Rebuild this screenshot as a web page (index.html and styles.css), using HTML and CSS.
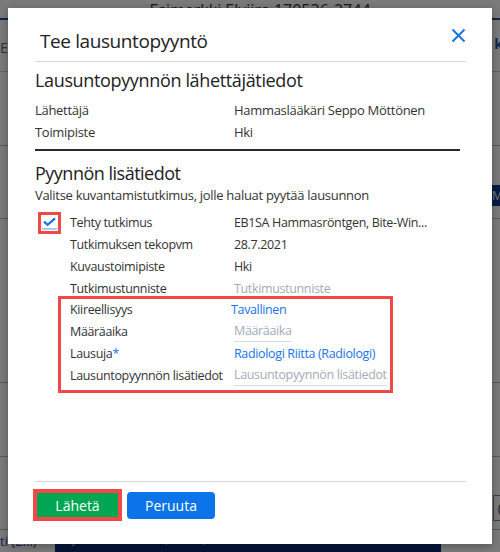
FILE: index.html
```html
<!DOCTYPE html>
<html lang="fi">
<head>
  <meta charset="UTF-8">
  <meta name="viewport" content="width=device-width, initial-scale=1">
  <title>Tee lausuntopyyntö</title>
  <link rel="stylesheet" href="styles.css">
</head>
<body>
  <div class="page">
    <div class="page-header">Esimerkki Elviira 170536-2744</div>
    <div class="page-tabs"><span>EL</span><span class="tab-right">k</span></div>
    <div class="page-row"></div>
    <div class="page-row"><span class="tag-right">Mö</span></div>
    <div class="page-row tall"></div>
    <div class="page-row"></div>
    <div class="page-row"><span class="count-right">(1</span></div>
    <div class="page-bottom">
      <span class="page-link">ti (2...)</span>
      <div class="command-bar">Syötä tähän koodi, fraasi, lomakkeen nimi tai vastaanotto</div>
    </div>
  </div>
  <div class="backdrop"></div>

  <div class="modal">
    <div class="modal-header">
      <h2 class="modal-title">Tee lausuntopyyntö</h2>
      <button class="close-btn" aria-label="Sulje">
        <svg width="15" height="15" viewBox="0 0 15 15"><path d="M1.5 1.5 L13.5 13.5 M13.5 1.5 L1.5 13.5" stroke="#1a73e8" stroke-width="2" fill="none"/></svg>
      </button>
    </div>

    <div class="modal-body">
      <h3 class="section-title">Lausuntopyynnön lähettäjätiedot</h3>
      <div class="info-row"><span class="label">Lähettäjä</span><span class="value">Hammaslääkäri Seppo Möttönen</span></div>
      <div class="info-row"><span class="label">Toimipiste</span><span class="value">Hki</span></div>
      <hr class="dark-line">

      <h3 class="section-title big">Pyynnön lisätiedot</h3>
      <p class="hint">Valitse kuvantamistutkimus, jolle haluat pyytää lausunnon</p>

      <div class="study">
        <div class="check-cell">
          <span class="checkbox">
            <span class="check-inner">
              <svg width="13" height="10" viewBox="0 0 13 10"><path d="M1 4.6 L4.6 7.8 L12 1.4" stroke="#1a73e8" stroke-width="2.3" fill="none"/></svg>
            </span>
          </span>
        </div>
        <div class="study-rows">
          <div class="row"><span class="label">Tehty tutkimus</span><span class="value">EB1SA Hammasröntgen, Bite-Win...</span></div>
          <div class="row"><span class="label">Tutkimuksen tekopvm</span><span class="value">28.7.2021</span></div>
          <div class="row"><span class="label">Kuvaustoimipiste</span><span class="value">Hki</span></div>
          <div class="row"><span class="label">Tutkimustunniste</span><span class="value placeholder">Tutkimustunniste</span></div>
          <div class="highlight">
            <div class="row"><span class="label">Kiireellisyys</span><span class="value link shift">Tavallinen</span></div>
            <div class="row"><span class="label">Määräaika</span><span class="value placeholder field">Määräaika</span></div>
            <div class="row"><span class="label">Lausuja<span class="req">*</span></span><span class="value link">Radiologi Riitta (Radiologi)</span></div>
            <div class="row"><span class="label">Lausuntopyynnön lisätiedot</span><span class="value placeholder field">Lausuntopyynnön lisätiedot</span></div>
          </div>
        </div>
      </div>
    </div>

    <div class="modal-footer">
      <span class="send-outline"><button class="btn btn-send">Lähetä</button></span>
      <button class="btn btn-cancel">Peruuta</button>
    </div>
  </div>
</body>
</html>
```

FILE: styles.css
```css
html, body {
  margin: 0;
  padding: 0;
  height: 100%;
  overflow: hidden;
}
body {
  font-family: 'Open Sans', 'Noto Sans', sans-serif;
  color: #333;
  background: #fff;
  position: relative;
}

/* page behind the dialog */
.page {
  height: 100%;
  display: flex;
  flex-direction: column;
}
.page-header {
  height: 20px;
  border-bottom: 2px solid #2a4f9e;
  text-align: center;
  font-size: 16px;
  line-height: 16px;
  color: #333;
  padding-left: 20px;
  box-sizing: border-box;
  padding-top: 2px;
}
.page-tabs {
  height: 52px;
  border-bottom: 1px solid #ccc;
  display: flex;
  justify-content: space-between;
  align-items: center;
  font-size: 14px;
  color: #666;
  padding-top: 4px;
}
.tab-right { color: #1c4fa8; font-weight: 700; margin-right: -3px; align-self: flex-start; margin-top: 10px; }
.page-row {
  height: 80px;
  border-bottom: 1px solid #bbb;
  display: flex;
  justify-content: flex-end;
  align-items: flex-end;
}
.page-row.tall { height: 180px; }
.tag-right {
  background: #0d3b8a;
  color: #fff;
  font-size: 12px;
  padding: 2px 0 2px 6px;
  margin-bottom: 12px;
  margin-right: -10px;
}
.count-right {
  font-size: 13px;
  color: #444;
  border: 1px solid #888;
  padding: 3px 4px;
  margin-right: -14px;
  margin-bottom: 8px;
}
.page-bottom {
  margin-top: auto;
  display: flex;
  align-items: flex-end;
  height: 24px;
}
.page-link {
  font-size: 13px;
  color: #2a4f9e;
  width: 55px;
  padding-bottom: 2px;
}
.command-bar {
  width: 386px;
  height: 22px;
  background: #0c2a73;
  color: #c9d2e6;
  font-size: 12px;
  padding-left: 10px;
  box-sizing: border-box;
  line-height: 18px;
}
.backdrop {
  position: absolute;
  inset: 0;
  background: rgba(0, 0, 0, 0.52);
}

/* dialog */
.modal {
  position: absolute;
  left: 8px;
  top: 8px;
  width: 484px;
  height: 536px;
  background: #fff;
  box-sizing: border-box;
  padding: 20px 26px 23px 27px;
  display: flex;
  flex-direction: column;
  box-shadow: 0 2px 8px rgba(0,0,0,0.3);
}
.modal-header {
  display: flex;
  justify-content: space-between;
  align-items: flex-start;
  border-bottom: 1px solid #d3dae4;
  padding-bottom: 7px;
}
.modal-title {
  margin: 0 0 0 5px;
  font-size: 19px;
  letter-spacing: -0.4px;
  line-height: 26px;
  font-weight: 400;
  color: #222;
}
.close-btn {
  border: none;
  background: none;
  padding: 0;
  margin: 0;
  width: 15px;
  height: 15px;
}
.close-btn svg { display: block; }

.modal-body { padding-top: 6px; }
.section-title {
  margin: 0 0 7px;
  font-size: 18px;
  letter-spacing: -0.35px;
  line-height: 24px;
  font-weight: 400;
  color: #222;
}
.section-title.big { letter-spacing: -0.5px; margin-bottom: 0; }
.info-row, .hint {
  font-size: 13px;
  letter-spacing: -0.3px;
}
.row {
  font-size: 12.5px;
  letter-spacing: -0.35px;
}
.info-row, .row {
  display: flex;
  line-height: 22px;
}
.info-row .label { width: 199px; }
.label { color: #333; white-space: nowrap; }
.value { color: #333; white-space: nowrap; }
.dark-line {
  border: none;
  border-top: 2px solid #2a2a2a;
  margin: 6px 6px 10px 0;
}
.hint {
  margin: 0 0 7px;
  line-height: 20px;
}
.study {
  display: grid;
  grid-template-columns: 35px 1fr;
}
.check-cell { padding-left: 3px; }
.checkbox {
  display: flex;
  width: 23px;
  height: 22px;
  box-sizing: border-box;
  border: 3px solid #f24848;
  background: #fff;
  align-items: center;
  justify-content: center;
}
.check-inner {
  display: flex;
  width: 15px;
  height: 13px;
  box-sizing: border-box;
  border-bottom: 2px solid #a9c8f2;
  align-items: center;
  justify-content: center;
}
.row .label { width: 164px; flex-shrink: 0; }
.placeholder { color: #a3abb8; }
.field { border-bottom: 1px solid #d6dde8; line-height: 20px; margin-bottom: 1px; }
.link { color: #1a73e8; }
.shift { margin-left: -3px; }
.req { color: #1a73e8; }
.highlight {
  border: 3px solid #f24848;
  margin: -4px 0 0 -12px;
  padding: 0 0 3px 9px;
  width: 335px;
  box-sizing: border-box;
}

.modal-footer {
  margin-top: auto;
  border-top: 1px solid #d3dae4;
  padding-top: 7px;
  display: flex;
  align-items: center;
  gap: 5px;
}
.send-outline {
  display: inline-flex;
  border: 4px solid #f24848;
  margin-left: -2px;
}
.btn {
  font-family: inherit;
  font-size: 14px;
  color: #fff;
  border: none;
  height: 24px;
  cursor: pointer;
}
.btn-send {
  width: 81px;
  background: #00a651;
}
.btn-cancel {
  width: 88px;
  height: 27px;
  background: #0a74e8;
  border-radius: 4px;
}
```
